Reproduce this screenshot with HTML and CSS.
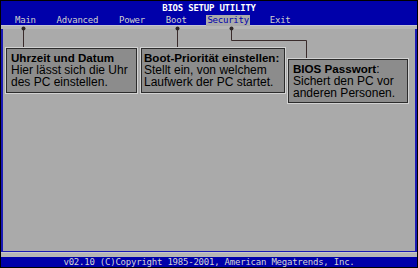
FILE: index.html
```html
<!DOCTYPE html>
<html lang="de">
<head>
<meta charset="utf-8">
<title>BIOS SETUP UTILITY</title>
<link rel="stylesheet" href="styles.css">
</head>
<body>
<div class="screen">
  <header class="topbar">
    <div class="title">BIOS SETUP UTILITY</div>
    <nav class="menu">
      <span class="menu-item">Main</span>
      <span class="menu-item">Advanced</span>
      <span class="menu-item">Power</span>
      <span class="menu-item">Boot</span>
      <span class="menu-item active">Security</span>
      <span class="menu-item">Exit</span>
    </nav>
  </header>
  <div class="band"></div>
  <main class="content"></main>
  <div class="band band-bottom"></div>
  <footer class="footer">v02.10 (C)Copyright 1985-2001, American Megatrends, Inc.</footer>

  <svg class="callout-lines" width="418" height="268" viewBox="0 0 418 268">
    <g fill="none" stroke="#3a2c2c" stroke-width="1">
      <path d="M23.5 29 V48"/>
      <path d="M177.5 29 V48"/>
      <path d="M231.5 29 V40.5 H306.5 V59"/>
    </g>
    <g fill="#2e2626">
      <circle cx="23.5" cy="28.5" r="2"/>
      <circle cx="177.5" cy="28.5" r="2"/>
      <circle cx="231.5" cy="28.5" r="2"/>
    </g>
  </svg>

  <div class="note note-time">
    <b>Uhrzeit und Datum</b><br>Hier lässt sich die Uhr<br>des PC einstellen.
  </div>
  <div class="note note-boot">
    <b>Boot-Priorität einstellen:</b><br>Stellt ein, von welchem<br>Laufwerk der PC startet.
  </div>
  <div class="note note-pass">
    <b>BIOS Passwort</b>:<br>Sichert den PC vor<br>anderen Personen.
  </div>
</div>
</body>
</html>
```
FILE: styles.css
```css
html, body {
  margin: 0;
  padding: 0;
  background: #000;
}

.screen {
  position: relative;
  width: 418px;
  height: 268px;
  padding: 1px;
  box-sizing: border-box;
  background: #000;
  display: flex;
  flex-direction: column;
  overflow: hidden;
}

.topbar {
  background: #0000aa;
  border-bottom: 1px solid #c4c4d4;
  padding: 2px 0 0 14px;
  box-sizing: content-box;
  height: 22px;
  font-family: "DejaVu Sans Mono", "Liberation Mono", monospace;
  font-size: 9px;
  letter-spacing: -0.22px;
  flex: none;
}

.title {
  line-height: 10px;
  height: 10px;
  color: #ffffff;
  font-weight: bold;
  text-align: center;
  margin-left: -14px;
}

.menu {
  display: flex;
  gap: 20.8px;
  margin-top: 2px;
  line-height: 11px;
  height: 11px;
}

.menu-item {
  color: #cfcfcf;
}

.menu-item.active {
  background: #aaaaaa;
  color: #0000aa;
  padding: 0 1px;
  margin: 0 -1px;
}

.band {
  height: 3px;
  background: #b6b6b6;
  flex: none;
}

.band-bottom {
  height: 5px;
  border-top: 1px solid #c8c8c8;
  box-sizing: border-box;
}

.content {
  flex: 1;
  background: #aaaaaa;
  border-left: 2px solid #1a1ab4;
  border-right: 2px solid #1a1ab4;
  border-bottom: 1px solid #1a1ab4;
}

.footer {
  height: 10px;
  line-height: 10px;
  background: #0000aa;
  color: #d4d4d4;
  text-align: center;
  font-family: "DejaVu Sans Mono", "Liberation Mono", monospace;
  font-size: 9px;
  letter-spacing: -0.22px;
  white-space: nowrap;
  flex: none;
}

.callout-lines {
  position: absolute;
  left: 0;
  top: 0;
}

.note {
  position: absolute;
  box-sizing: border-box;
  background: #8c8c8c;
  border: 1px solid #2c2c2c;
  box-shadow: 0 0 0 1px #d2d2d2;
  padding: 3px 3px 0 4px;
  font-family: "Liberation Sans", Arial, sans-serif;
  font-size: 12px;
  line-height: 12px;
  color: #000;
  white-space: nowrap;
}

.note b {
  font-size: 11.6px;
}

.note-time {
  left: 6px;
  top: 48px;
  width: 131px;
  height: 45px;
}

.note-boot {
  left: 141px;
  top: 48px;
  width: 144px;
  height: 45px;
  padding-left: 2px;
}

.note-pass {
  left: 288px;
  top: 59px;
  width: 120px;
  height: 44px;
}
```
